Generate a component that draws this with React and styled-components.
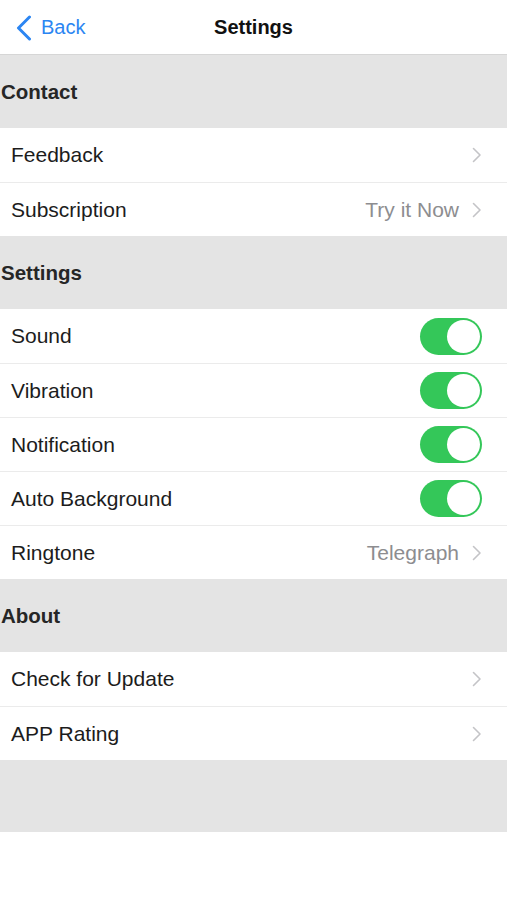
import React from 'react'
import styled, { createGlobalStyle } from 'styled-components'

const GlobalStyle = createGlobalStyle`
  html, body {
    margin: 0;
    padding: 0;
    background: #fff;
  }
  body {
    font-family: 'Liberation Sans', Arial, sans-serif;
    -webkit-font-smoothing: antialiased;
  }
`;

const Screen = styled.div`
  width: 507px;
  min-height: 900px;
  background: #fff;
  display: flex;
  flex-direction: column;
`;

const NavBar = styled.div`
  height: 54px;
  display: grid;
  grid-template-columns: 1fr auto 1fr;
  align-items: center;
  border-bottom: 1px solid #d6d6d6;
  box-sizing: content-box;
`;

const BackButton = styled.div`
  display: flex;
  align-items: center;
  gap: 9px;
  padding-left: 16px;
  padding-top: 1px;
  color: #2c86f2;
  font-size: 20px;
`;

const Title = styled.div`
  font-size: 20px;
  font-weight: 700;
  color: #111;
  padding-top: 1px;
`;

const SectionHeader = styled.div`
  height: 73px;
  background: #e4e4e4;
  display: flex;
  align-items: center;
  padding-left: 1px;
  font-size: 20.5px;
  font-weight: 700;
  color: #262626;
`;

const Row = styled.div`
  height: 54px;
  box-sizing: border-box;
  display: flex;
  align-items: center;
  justify-content: space-between;
  padding: 0 25px 0 11px;
  background: #fff;

  & + & {
    border-top: 1px solid #ebebeb;
  }
`;

const Label = styled.span`
  font-size: 21px;
  color: #1c1c1c;
`;

const Accessory = styled.div`
  display: flex;
  align-items: center;
  gap: 13px;
`;

const Value = styled.span`
  font-size: 21px;
  color: #8d8d90;
`;

const Toggle = styled.div`
  width: 62px;
  height: 37px;
  border-radius: 19px;
  background: ${p => (p.$on ? '#34c759' : '#e5e5ea')};
  display: flex;
  align-items: center;
  justify-content: ${p => (p.$on ? 'flex-end' : 'flex-start')};
  padding: 2px;
  box-sizing: border-box;
`;

const Knob = styled.div`
  width: 33px;
  height: 33px;
  border-radius: 50%;
  background: #fff;
`;

const Footer = styled.div`
  height: 72px;
  background: #e4e4e4;
`;

const Chevron = () => (
  <svg width="10" height="16" viewBox="0 0 10 16">
    <polyline points="1.5,1.5 8,8 1.5,14.5" fill="none" stroke="#c4c4c7" strokeWidth="1.6" strokeLinecap="round" strokeLinejoin="round" />
  </svg>
);

const BackChevron = () => (
  <svg width="16" height="26" viewBox="0 0 16 26">
    <polyline points="13.5,2 2.5,13 13.5,24" fill="none" stroke="#2c86f2" strokeWidth="3" strokeLinecap="round" strokeLinejoin="round" />
  </svg>
);

const LinkRow = ({ label, value }) => (
  <Row>
    <Label>{label}</Label>
    <Accessory>
      {value && <Value>{value}</Value>}
      <Chevron />
    </Accessory>
  </Row>
);

const SwitchRow = ({ label, on }) => (
  <Row>
    <Label>{label}</Label>
    <Toggle $on={on}>
      <Knob />
    </Toggle>
  </Row>
);

const App = () => {
  return (
    <Screen>
      <GlobalStyle />
      <NavBar>
        <BackButton>
          <BackChevron />
          <span>Back</span>
        </BackButton>
        <Title>Settings</Title>
        <div />
      </NavBar>

      <SectionHeader>Contact</SectionHeader>
      <div>
        <LinkRow label="Feedback" />
        <LinkRow label="Subscription" value="Try it Now" />
      </div>

      <SectionHeader>Settings</SectionHeader>
      <div>
        <SwitchRow label="Sound" on />
        <SwitchRow label="Vibration" on />
        <SwitchRow label="Notification" on />
        <SwitchRow label="Auto Background" on />
        <LinkRow label="Ringtone" value="Telegraph" />
      </div>

      <SectionHeader>About</SectionHeader>
      <div>
        <LinkRow label="Check for Update" />
        <LinkRow label="APP Rating" />
      </div>

      <Footer />
    </Screen>
  )
}

export default App
